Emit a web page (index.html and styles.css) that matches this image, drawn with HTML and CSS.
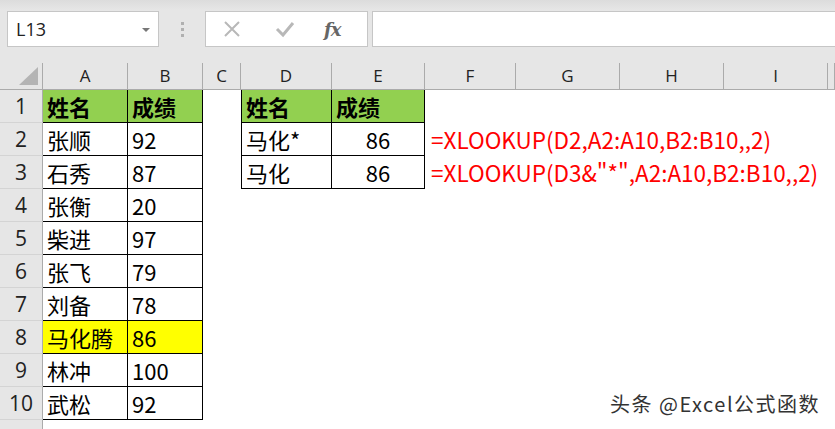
FILE: index.html
```html
<!DOCTYPE html>
<html lang="zh-CN">
<head>
    <meta charset="UTF-8">
    <title>XLOOKUP</title>
    <link rel="stylesheet" href="styles.css">
</head>
<body>
    <div class="app">
        <!-- 编辑栏 -->
        <div class="formula-bar">
            <div class="name-box">
                <span>L13</span>
                <span class="caret"></span>
            </div>
            <div class="grip"><i></i><i></i><i></i></div>
            <div class="fx-box">
                <svg class="ico" width="18" height="18" viewBox="0 0 18 18"><path d="M2 2 L16 16 M16 2 L2 16" stroke="#b8b8b8" stroke-width="2" fill="none"/></svg>
                <svg class="ico" width="20" height="18" viewBox="0 0 20 18"><path d="M2 9 L8 15 L18 3" stroke="#b8b8b8" stroke-width="3" fill="none"/></svg>
                <span class="fx">fx</span>
            </div>
            <div class="input-box"></div>
        </div>

        <!-- 工作表 -->
        <div class="sheet">
            <div class="hd corner"><span class="tri"></span></div>
            <div class="hd">A</div>
            <div class="hd">B</div>
            <div class="hd">C</div>
            <div class="hd">D</div>
            <div class="hd">E</div>
            <div class="hd">F</div>
            <div class="hd">G</div>
            <div class="hd">H</div>
            <div class="hd">I</div>
            <div class="hd"></div>

            <div class="rn">1</div>
            <div class="c t green b">姓名</div>
            <div class="c t green b">成绩</div>
            <div class="c"></div>
            <div class="c t tl green b">姓名</div>
            <div class="c t green b">成绩</div>
            <div class="c"></div><div class="c"></div><div class="c"></div><div class="c"></div><div class="c"></div>

            <div class="rn">2</div>
            <div class="c t">张顺</div>
            <div class="c t">92</div>
            <div class="c"></div>
            <div class="c t tl">马化*</div>
            <div class="c t mid">86</div>
            <div class="c red">=XLOOKUP(D2,A2:A10,B2:B10,,2)</div>
            <div class="c"></div><div class="c"></div><div class="c"></div><div class="c"></div>

            <div class="rn">3</div>
            <div class="c t">石秀</div>
            <div class="c t">87</div>
            <div class="c"></div>
            <div class="c t tl">马化</div>
            <div class="c t mid">86</div>
            <div class="c red">=XLOOKUP(D3&amp;"*",A2:A10,B2:B10,,2)</div>
            <div class="c"></div><div class="c"></div><div class="c"></div><div class="c"></div>

            <div class="rn">4</div>
            <div class="c t">张衡</div>
            <div class="c t">20</div>
            <div class="c"></div><div class="c"></div><div class="c"></div><div class="c"></div><div class="c"></div><div class="c"></div><div class="c"></div><div class="c"></div>

            <div class="rn">5</div>
            <div class="c t">柴进</div>
            <div class="c t">97</div>
            <div class="c"></div><div class="c"></div><div class="c"></div><div class="c"></div><div class="c"></div><div class="c"></div><div class="c"></div><div class="c"></div>

            <div class="rn">6</div>
            <div class="c t">张飞</div>
            <div class="c t">79</div>
            <div class="c"></div><div class="c"></div><div class="c"></div><div class="c"></div><div class="c"></div><div class="c"></div><div class="c"></div><div class="c"></div>

            <div class="rn">7</div>
            <div class="c t">刘备</div>
            <div class="c t">78</div>
            <div class="c"></div><div class="c"></div><div class="c"></div><div class="c"></div><div class="c"></div><div class="c"></div><div class="c"></div><div class="c"></div>

            <div class="rn">8</div>
            <div class="c t yellow">马化腾</div>
            <div class="c t yellow">86</div>
            <div class="c"></div><div class="c"></div><div class="c"></div><div class="c"></div><div class="c"></div><div class="c"></div><div class="c"></div><div class="c"></div>

            <div class="rn">9</div>
            <div class="c t">林冲</div>
            <div class="c t">100</div>
            <div class="c"></div><div class="c"></div><div class="c"></div><div class="c"></div><div class="c"></div><div class="c"></div><div class="c"></div><div class="c"></div>

            <div class="rn">10</div>
            <div class="c t">武松</div>
            <div class="c t">92</div>
            <div class="c"></div><div class="c"></div><div class="c"></div><div class="c"></div><div class="c"></div><div class="c"></div><div class="c"></div><div class="c"></div>

            <div class="rn"></div>
            <div class="c"></div><div class="c"></div><div class="c"></div><div class="c"></div><div class="c"></div><div class="c"></div><div class="c"></div><div class="c"></div><div class="c"></div><div class="c"></div>
        </div>

        <div class="watermark">头条 @Excel公式函数</div>
    </div>
</body>
</html>
```

FILE: styles.css
```css
* {
    margin: 0;
    padding: 0;
    box-sizing: border-box;
}

body {
    width: 835px;
    height: 429px;
    overflow: hidden;
    background-color: #fff;
    font-family: "Noto Sans CJK SC", sans-serif;
}

.app {
    position: relative;
    width: 835px;
    height: 429px;
    overflow: hidden;
}

/* 编辑栏 */
.formula-bar {
    display: flex;
    align-items: stretch;
    height: 63px;
    padding: 11px 0 16px 7px;
    background: linear-gradient(#dcdcdc, #e6e6e6 10px);
}

.name-box {
    width: 152px;
    display: flex;
    align-items: center;
    justify-content: space-between;
    padding: 0 8px 0 8px;
    background-color: #fff;
    border: 1px solid #c6c6c6;
    font-family: "Open Sans", sans-serif;
    font-size: 18px;
    color: #222;
}

.caret {
    width: 0;
    height: 0;
    border-left: 4px solid transparent;
    border-right: 4px solid transparent;
    border-top: 4px solid #777;
    margin-top: 2px;
}

.grip {
    width: 46px;
    display: flex;
    flex-direction: column;
    align-items: center;
    justify-content: center;
    gap: 3px;
}

.grip i {
    display: block;
    width: 3px;
    height: 3px;
    background-color: #b0b0b0;
}

.fx-box {
    width: 163px;
    display: flex;
    align-items: center;
    padding-left: 17px;
    gap: 37px;
    background-color: #fff;
    border: 1px solid #c6c6c6;
}

.fx-box .ico:nth-child(2) {
    margin-left: -3px;
}

.fx {
    font-family: "DejaVu Serif", serif;
    font-style: italic;
    font-weight: bold;
    font-size: 18px;
    color: #666;
    margin-left: -8px;
    letter-spacing: -1px;
}

.input-box {
    flex: 1;
    margin-left: 4px;
    background-color: #fff;
    border: 1px solid #c6c6c6;
    border-right: none;
}

/* 工作表 */
.sheet {
    display: grid;
    grid-template-columns: 43px 85px 75px 38px 91px 93px 91px 104px 104px 104px 1fr;
    grid-template-rows: 27px repeat(10, 33px) 33px;
}

.hd {
    background-color: #e6e6e6;
    border-right: 1px solid #ababab;
    border-bottom: 1px solid #ababab;
    font-family: "Open Sans", sans-serif;
    font-size: 17px;
    line-height: 26px;
    text-align: center;
    color: #222;
}

.corner {
    position: relative;
}

.tri {
    position: absolute;
    right: 4px;
    bottom: 4px;
    width: 0;
    height: 0;
    border-left: 19px solid transparent;
    border-bottom: 18px solid #b4b4b4;
}

.rn {
    background-color: #e6e6e6;
    border-right: 1px solid #ababab;
    border-bottom: 1px solid #d4d4d4;
    font-family: "Open Sans", sans-serif;
    font-size: 21px;
    line-height: 32px;
    text-align: center;
    color: #222;
}

.c {
    font-size: 22px;
    line-height: 32px;
    padding-left: 4px;
    white-space: nowrap;
    color: #000;
}

.t {
    border-right: 1px solid #000;
    border-bottom: 1px solid #000;
}

.tl {
    border-left: 1px solid #000;
}

.green {
    background-color: #92d050;
}

.yellow {
    background-color: #ffff00;
}

.b {
    font-weight: bold;
}

.mid {
    text-align: center;
    padding-left: 0;
}

.red {
    color: #ff0000;
    font-size: 22.5px;
    padding-left: 6px;
    overflow: visible;
}

.watermark {
    position: absolute;
    left: 610px;
    top: 389px;
    font-size: 20px;
    color: #333;
    text-shadow: 0 0 2px #fff, 0 0 2px #fff;
    letter-spacing: 1.5px;
}
```
